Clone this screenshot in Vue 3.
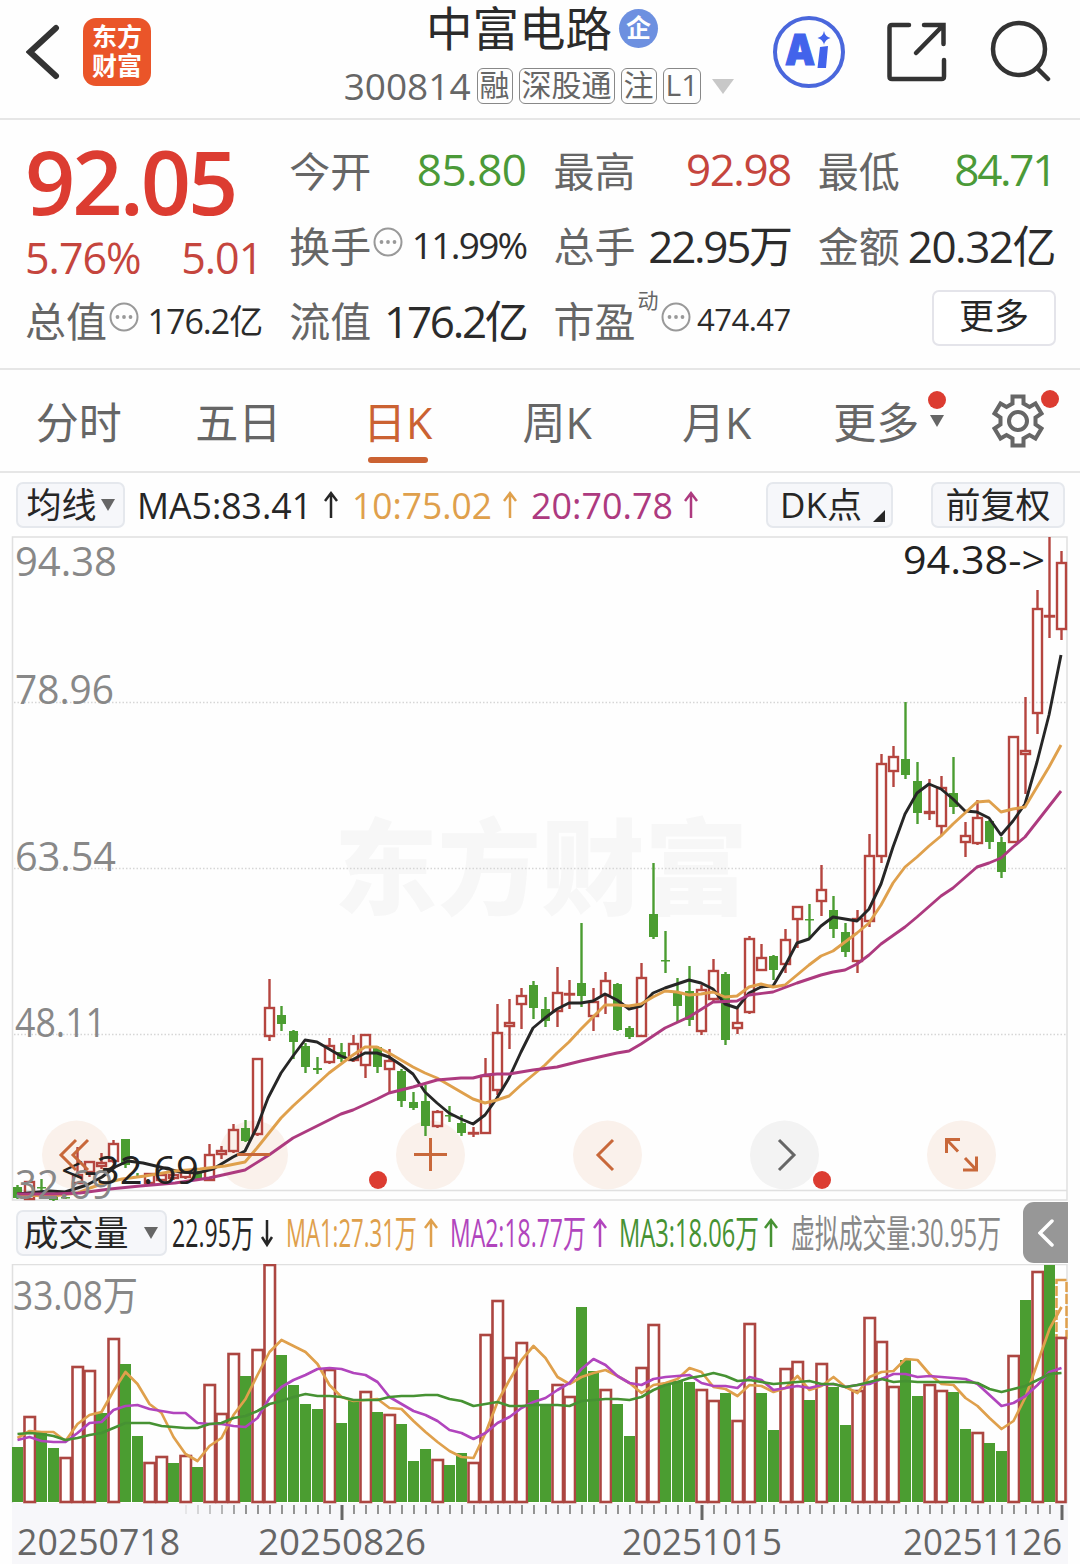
<template>
  <div class="page">
    <header class="header">
      <div class="header-left">
        <svg class="back-icon" viewBox="0 0 34 56"><path d="M30 4 L4 28 L30 52" /></svg>
        <div class="logo"><span>东方</span><span>财富</span></div>
      </div>

      <div class="stock">
        <div class="stock-name">
          <span class="name">中富电路</span>
          <span class="badge">企</span>
        </div>
        <div class="stock-code">
          <span class="code">300814</span>
          <span v-for="tag in tags" :key="tag" class="tag">{{ tag }}</span>
          <svg class="code-arrow" viewBox="0 0 22 15"><path d="M0 0 H22 L11 15 Z" /></svg>
        </div>
      </div>

      <div class="header-right">
        <svg class="ai-icon" viewBox="0 0 74 74">
          <circle cx="37" cy="37" r="34" />
          <text x="13" y="50" textLength="30" lengthAdjust="spacingAndGlyphs">A</text>
          <path d="M48 32 L56 31 L54 53 H45.500 Z M52 16 Q53 21.500 58.500 23 Q53 24.500 52 30 Q51 24.500 45.500 23 Q51 21.500 52 16 Z" />
        </svg>
        <svg class="line-icon share-icon" viewBox="0 0 60 60">
          <path d="M22 3 H5 Q2.500 3 2.500 5.500 V54.500 Q2.500 57 5 57 H54.500 Q57 57 57 54.500 V38" />
          <path d="M37 3 H56.500 V22 M56 3.500 L29 31" />
        </svg>
        <svg class="line-icon search-icon" viewBox="0 0 62 62">
          <circle cx="29" cy="29" r="26" />
          <path d="M47 48 L58 59" />
        </svg>
      </div>
    </header>

    <section class="stats">
      <div class="price-block">
        <div class="price">92.05</div>
        <div class="change"><span>5.76%</span><span>5.01</span></div>
      </div>
      <div v-for="item in stats" :key="item.label" class="stat">
        <span class="stat-label">{{ item.label }}</span>
        <sup v-if="item.sup" class="stat-sup">{{ item.sup }}</sup>
        <svg v-if="item.info" class="info-icon" viewBox="0 0 30 30">
          <circle class="ring" cx="15" cy="15" r="13.500" />
          <circle cx="8.500" cy="15" r="1.900" /><circle cx="15" cy="15" r="1.900" /><circle cx="21.500" cy="15" r="1.900" />
        </svg>
        <span class="stat-value" :class="[item.color, item.size]">{{ item.value }}</span>
      </div>
      <div class="stat stat-more"><button class="more-btn">更多</button></div>
    </section>

    <nav class="tabs">
      <div
        v-for="tab in tabs"
        :key="tab"
        class="tab"
        :class="{ active: tab === activeTab }"
        @click="activeTab = tab"
      >
        <span>{{ tab }}</span>
        <div v-if="tab === '更多'" class="tab-more">
          <i class="red-dot"></i>
          <svg viewBox="0 0 14 12"><path d="M0 0 H14 L7 12 Z" /></svg>
        </div>
      </div>
      <div class="settings">
        <svg viewBox="0 0 52 54">
          <path d="M20.500 2.500 H31.500 V9.500 L37.500 13 L43.500 9.500 L49.500 19.500 L43.500 23.500 V30.500 L49.500 34.500 L43.500 44.500 L37.500 41 L31.500 44.500 V51.500 H20.500 V44.500 L14.500 41 L8.500 44.500 L2.500 34.500 L8.500 30.500 V23.500 L2.500 19.500 L8.500 9.500 L14.500 13 L20.500 9.500 Z" />
          <circle cx="26" cy="27" r="9" />
        </svg>
        <i class="red-dot"></i>
      </div>
    </nav>

    <div class="ma-bar">
      <button class="chip chip-ma">均线<svg viewBox="0 0 14 12"><path d="M0 0 H14 L7 12 Z" /></svg></button>
      <svg class="ma-legend" viewBox="134 473 590 64">
        <g v-for="m in maLegend" :key="m.text" :class="m.color">
          <text :x="m.x" y="519" :textLength="m.w" lengthAdjust="spacingAndGlyphs">{{ m.text }}</text>
          <path :d="arrowUp(m.arrow, 493, 518)" />
        </g>
      </svg>
      <button class="chip chip-dk">DK点<svg viewBox="0 0 12 12"><path d="M12 0 V12 H0 Z" /></svg></button>
      <button class="chip chip-fq">前复权</button>
    </div>

    <svg class="chart" viewBox="0 536 1080 665">
      <text class="watermark" x="334" y="907" textLength="414" lengthAdjust="spacingAndGlyphs">东方财富</text>
      <path class="frame" d="M12.500 1200 V537 H1067 V1200 Z M12.500 1190.500 H1067" />
      <path class="grid-line" d="M14 702.500 H1067 M14 868.500 H1067 M14 1034.500 H1067" />

      <circle
        v-for="(x, i) in controls"
        :key="x"
        :cx="x"
        cy="1155"
        r="34.500"
        :class="i === 4 ? 'ctl-gray' : 'ctl'"
      />

      <g v-for="(c, i) in candles" :key="i" :class="c[0] ? 'up' : 'down'">
        <path :d="wick(c, i)" />
        <rect v-if="c[0]" :x="cx(i) - 4.500" :y="c[2] + 1" width="9" :height="Math.max(c[3] - c[2] - 2, 0.5)" />
        <rect v-else :x="cx(i) - 4.500" :y="c[2]" width="9" :height="Math.max(c[3] - c[2], 1.500)" />
      </g>

      <polyline class="line black" :points="ma5" />
      <polyline class="line orange" :points="ma10" />
      <polyline class="line magenta" :points="ma20" />

      <text
        v-for="l in priceLabels"
        :key="l.text"
        class="axis-text"
        x="15"
        :y="l.y"
        :textLength="l.w"
        lengthAdjust="spacingAndGlyphs"
      >{{ l.text }}</text>
      <text class="mark-text" x="903" y="574" textLength="142" lengthAdjust="spacingAndGlyphs">94.38-&gt;</text>
      <text class="mark-text" x="61" y="1184" textLength="138" lengthAdjust="spacingAndGlyphs">&lt;-32.69</text>

      <path class="ctl-icon" d="M76 1140 L61 1155 L76 1170 M88 1140 L73 1155 L88 1170" />
      <path class="ctl-icon" d="M237 1154.500 H270" />
      <path class="ctl-icon" d="M414 1154.500 H447 M430.500 1138 V1171" />
      <path class="ctl-icon" d="M613 1140 L598 1155 L613 1170" />
      <path class="ctl-icon gray" d="M779 1140 L794 1155 L779 1170" />
      <path class="ctl-icon" d="M960 1139.500 H946.500 V1153 M947 1140 L958 1151.500 M963 1170 H976.500 V1156.500 M976 1169.500 L965 1158" />
      <circle class="dot" cx="378" cy="1180" r="9" />
      <circle class="dot" cx="822" cy="1180" r="9" />
    </svg>

    <div class="volume-bar">
      <button class="chip chip-vol">成交量<svg viewBox="0 0 14 12"><path d="M0 0 H14 L7 12 Z" /></svg></button>
      <svg class="volume-legend" viewBox="167 1201 856 63">
        <g v-for="m in volumeLegend" :key="m.text" :class="m.color">
          <text :x="m.x" y="1247" :textLength="m.w" lengthAdjust="spacingAndGlyphs">{{ m.text }}</text>
          <path v-if="m.down" :d="arrowDown(m.arrow, 1220, 1245)" />
          <path v-else-if="m.arrow" :d="arrowUp(m.arrow, 1220, 1247)" />
        </g>
      </svg>
      <button class="side-btn"><svg viewBox="0 0 16 28"><path d="M14 2 L2 14 L14 26" /></svg></button>
    </div>

    <svg class="volume" viewBox="0 1264 1080 300">
      <rect class="axis-bg" x="12" y="1503" width="1056" height="61" />
      <path class="frame" d="M12.500 1503 V1264.500 H1067 V1503" />
      <text class="axis-text" x="13" y="1310" textLength="125" lengthAdjust="spacingAndGlyphs">33.08万</text>
      <rect class="estimate" x="1056.500" y="1280" width="10" height="58" />
      <g v-for="(v, i) in volumes" :key="i">
        <rect
          v-if="hollow.has(i)"
          class="vol-up"
          :x="cx(i) - 5"
          :y="v + 1"
          :width="i === 87 ? 9 : 10.500"
          :height="1501 - v"
        />
        <rect v-else class="vol-down" :x="cx(i) - 5.500" :y="v" width="11" :height="1502 - v" />
      </g>
      <polyline class="line vol-line orange" :points="series(vma1)" />
      <polyline class="line vol-line purple" :points="series(vma2)" />
      <polyline class="line vol-line green" :points="series(vma3)" />
      <line
        v-for="t in ticks"
        :key="t.x"
        :class="t.major ? 'tick-major' : 'tick'"
        :x1="t.x"
        :x2="t.x"
        y1="1505"
        :y2="t.major ? 1520 : 1514"
        :stroke-opacity="t.opacity"
      />
      <text
        v-for="d in dates"
        :key="d.text"
        class="date-text"
        :x="d.x"
        y="1555"
        :textLength="d.w"
        lengthAdjust="spacingAndGlyphs"
      >{{ d.text }}</text>
    </svg>
  </div>
</template>

<script setup>
import { ref } from 'vue';

const tags = ['融', '深股通', '注', 'L1'];

const stats = [
  { label: '今开', value: '85.80', color: 'green' },
  { label: '最高', value: '92.98', color: 'red', size: 'snug' },
  { label: '最低', value: '84.71', color: 'green', size: 'tight' },
  { label: '换手', value: '11.99%', info: true, size: 'mid' },
  { label: '总手', value: '22.95万', size: 'tight' },
  { label: '金额', value: '20.32亿', size: 'snug' },
  { label: '总值', value: '176.2亿', info: true, size: 'small' },
  { label: '流值', value: '176.2亿', size: 'tight' },
  { label: '市盈', value: '474.47', sup: '动', info: true, size: 'tiny' }
];

const tabs = ['分时', '五日', '日K', '周K', '月K', '更多'];
const activeTab = ref('日K');

const maLegend = [
  { text: 'MA5:83.41', x: 137, w: 175, arrow: 331, color: 'black' },
  { text: '10:75.02', x: 352, w: 140, arrow: 510, color: 'orange' },
  { text: '20:70.78', x: 531, w: 142, arrow: 691, color: 'magenta' }
];

const volumeLegend = [
  { text: '22.95万', x: 172, w: 82, arrow: 267, color: 'black', down: true },
  { text: 'MA1:27.31万', x: 286, w: 131, arrow: 431, color: 'orange' },
  { text: 'MA2:18.77万', x: 450, w: 136, arrow: 600, color: 'purple' },
  { text: 'MA3:18.06万', x: 619, w: 140, arrow: 771, color: 'green' },
  { text: '虚拟成交量:30.95万', x: 791, w: 210, color: 'gray' }
];

const priceLabels = [
  { text: '94.38', y: 576, w: 102 },
  { text: '78.96', y: 704, w: 99 },
  { text: '63.54', y: 871, w: 101 },
  { text: '48.11', y: 1037, w: 91 },
  { text: '32.69', y: 1199, w: 98 }
];

const dates = [
  { text: '20250718', x: 17, w: 163 },
  { text: '20250826', x: 258, w: 168 },
  { text: '20251015', x: 622, w: 160 },
  { text: '20251126', x: 903, w: 159 }
];

const controls = [76.5, 253.5, 430.5, 607.5, 784.5, 961.5];

// [up, high, body top, body bottom, low]
const candles = [
  [0, 1185, 1187, 1198, 1199], [1, 1181, 1181, 1200, 1200], [0, 1179, 1187, 1188, 1193], [0, 1197, 1197, 1200, 1201],
  [0, 1197, 1197, 1198, 1199], [1, 1147, 1174, 1184, 1184], [1, 1161, 1161, 1173, 1177], [1, 1153, 1162, 1167, 1169],
  [1, 1140, 1143, 1162, 1163], [0, 1139, 1139, 1165, 1168], [0, 1173, 1176, 1177, 1178], [1, 1173, 1173, 1184, 1184],
  [1, 1174, 1174, 1181, 1181], [1, 1172, 1174, 1179, 1180], [1, 1170, 1171, 1178, 1179], [0, 1171, 1172, 1179, 1180],
  [1, 1144, 1154, 1181, 1181], [1, 1146, 1150, 1155, 1159], [1, 1124, 1129, 1152, 1153], [0, 1120, 1128, 1141, 1142],
  [1, 1058, 1058, 1135, 1136], [1, 979, 1007, 1037, 1041], [0, 1006, 1015, 1024, 1031], [0, 1030, 1031, 1042, 1059],
  [0, 1043, 1046, 1067, 1073], [0, 1057, 1068, 1070, 1074], [1, 1038, 1045, 1063, 1064], [0, 1043, 1052, 1059, 1062],
  [1, 1035, 1043, 1061, 1062], [1, 1034, 1034, 1066, 1078], [0, 1046, 1047, 1067, 1073], [1, 1049, 1060, 1070, 1093],
  [0, 1069, 1071, 1101, 1107], [0, 1092, 1102, 1108, 1110], [0, 1085, 1101, 1126, 1136], [1, 1110, 1111, 1127, 1128],
  [0, 1106, 1115, 1116, 1122], [0, 1115, 1123, 1133, 1136], [1, 1127, 1132, 1134, 1137], [1, 1058, 1075, 1134, 1134],
  [1, 1004, 1032, 1091, 1095], [1, 999, 1022, 1027, 1049], [1, 988, 995, 1005, 1029], [0, 981, 985, 1008, 1019],
  [0, 997, 1009, 1021, 1027], [1, 967, 992, 1012, 1027], [1, 980, 993, 994, 1009], [0, 923, 983, 996, 1007],
  [1, 988, 1001, 1017, 1031], [1, 972, 980, 996, 1014], [0, 983, 984, 1030, 1031], [0, 1026, 1028, 1037, 1039],
  [1, 963, 977, 1037, 1037], [0, 863, 914, 937, 939], [0, 931, 960, 961, 973], [0, 978, 993, 1006, 1022],
  [0, 966, 991, 1020, 1026], [1, 985, 989, 1032, 1035], [1, 959, 970, 1000, 1003], [0, 972, 974, 1040, 1045],
  [1, 1007, 1022, 1029, 1034], [1, 936, 938, 1013, 1014], [1, 944, 957, 971, 971], [0, 955, 956, 970, 980],
  [1, 929, 939, 965, 973], [1, 906, 906, 920, 948], [0, 904, 919, 920, 938], [1, 865, 889, 902, 916],
  [0, 896, 910, 929, 938], [0, 923, 932, 952, 957], [1, 910, 918, 962, 973], [1, 834, 855, 922, 927],
  [1, 754, 763, 857, 863], [1, 746, 756, 772, 787], [0, 702, 759, 775, 779], [0, 762, 781, 813, 824],
  [1, 779, 811, 814, 820], [1, 776, 787, 827, 835], [0, 757, 793, 807, 814], [1, 822, 835, 843, 857],
  [1, 800, 817, 844, 845], [0, 820, 821, 842, 849], [0, 837, 842, 872, 878], [1, 736, 736, 843, 843],
  [1, 697, 750, 755, 794], [1, 590, 608, 714, 734], [1, 537, 615, 617, 638], [1, 551, 562, 630, 640]
];

const ma5 = '17,1194 50,1191 65,1192 87,1185 102,1177 115,1167 128,1161 143,1163 160,1167 180,1172 197,1173 213,1169 223,1163 233,1157 245,1151 257,1127 268,1098 281,1073 293,1056 305,1040 317,1042 329,1049 341,1056 352,1060 365,1053 377,1053 389,1057 401,1065 413,1074 425,1092 437,1103 449,1113 461,1119 473,1124 485,1115 497,1098 509,1078 521,1052 533,1028 545,1018 557,1009 569,1003 581,1003 593,1001 605,994 617,1000 629,1009 641,1006 653,993 665,988 677,984 689,980 701,983 713,989 725,1004 737,1008 749,993 761,987 773,986 785,966 797,943 809,939 821,926 833,917 845,919 857,921 869,909 881,884 893,847 905,814 917,793 929,784 941,789 953,799 965,811 977,812 989,818 1001,835 1013,821 1025,804 1037,762 1049,715 1061,655';
const ma10 = '17,1195 53,1196 77,1193 90,1188 105,1183 122,1179 145,1176 175,1171 200,1169 225,1166 245,1162 257,1148 269,1133 281,1118 293,1106 305,1095 317,1084 329,1073 341,1064 353,1055 365,1047 377,1047 389,1053 401,1060 413,1067 425,1073 437,1078 449,1085 461,1092 473,1099 485,1103 497,1100 509,1096 521,1085 533,1075 545,1065 557,1053 569,1042 581,1029 593,1017 605,1005 617,1005 629,1006 641,1004 653,997 665,991 677,992 689,995 701,994 713,992 725,997 737,996 749,987 761,984 773,987 785,985 797,975 809,965 821,956 833,951 845,942 857,933 869,923 881,905 893,883 905,867 917,857 929,846 941,836 953,824 965,813 977,802 989,801 1001,812 1013,809 1025,807 1037,787 1049,767 1061,745';
const ma20 = '17,1194 53,1194 80,1193 110,1189 140,1186 175,1183 209,1178 245,1170 269,1155 293,1138 317,1126 341,1114 353,1110 377,1099 389,1093 413,1087 437,1080 461,1078 473,1078 485,1075 497,1074 509,1074 533,1070 557,1067 581,1061 617,1053 629,1051 641,1044 665,1028 689,1017 713,1002 737,1001 749,995 773,992 797,983 821,975 833,972 845,970 857,964 869,955 881,944 905,927 917,917 941,896 953,888 977,867 989,863 1001,858 1013,847 1025,837 1061,791';

const volumes = [
  1447, 1416, 1433, 1448, 1457, 1366, 1370, 1413, 1338, 1364, 1436, 1462, 1456, 1463, 1455, 1467, 1384, 1413, 1353, 1376, 1349, 1264,
  1355, 1385, 1404, 1409, 1369, 1423, 1400, 1391, 1412, 1414, 1424, 1461, 1449, 1459, 1465, 1453, 1462, 1334, 1300, 1357, 1342, 1390,
  1405, 1384, 1396, 1307, 1371, 1389, 1404, 1436, 1367, 1324, 1384, 1381, 1382, 1389, 1400, 1393, 1420, 1323, 1393, 1430, 1368, 1361,
  1400, 1363, 1387, 1425, 1390, 1317, 1341, 1386, 1360, 1396, 1384, 1390, 1392, 1429, 1432, 1443, 1451, 1355, 1300, 1271, 1265, 1337
];
const hollow = new Set([
  1, 4, 5, 6, 8, 11, 12, 14, 16, 17, 18, 20, 21, 26, 29, 31, 35, 38, 39, 40, 41, 42, 45, 46, 49, 52, 53, 57, 58, 60, 61,
  64, 65, 67, 70, 71, 72, 73, 76, 77, 80, 83, 85, 87
]);

const vma1 = [
  1438, 1431, 1432, 1432, 1441, 1424, 1415, 1412, 1391, 1372, 1384, 1404, 1413, 1437, 1454, 1461, 1446, 1438, 1415, 1399, 1375, 1352,
  1340, 1346, 1352, 1364, 1385, 1397, 1401, 1400, 1399, 1408, 1409, 1421, 1432, 1442, 1451, 1457, 1458, 1433, 1402, 1380, 1360, 1346,
  1358, 1377, 1384, 1377, 1373, 1370, 1376, 1383, 1393, 1385, 1383, 1379, 1368, 1372, 1387, 1389, 1396, 1385, 1386, 1392, 1388, 1376,
  1390, 1386, 1377, 1387, 1393, 1377, 1372, 1371, 1359, 1360, 1374, 1384, 1385, 1398, 1406, 1418, 1429, 1421, 1397, 1363, 1329, 1307
];
const vma2 = [
  1440, 1437, 1441, 1442, 1442, 1433, 1423, 1422, 1410, 1406, 1405, 1409, 1411, 1413, 1413, 1423, 1424, 1424, 1426, 1427, 1418, 1398,
  1387, 1380, 1375, 1369, 1368, 1369, 1373, 1375, 1382, 1397, 1404, 1411, 1415, 1421, 1430, 1433, 1439, 1433, 1423, 1417, 1408, 1402,
  1398, 1390, 1383, 1369, 1359, 1365, 1376, 1383, 1385, 1379, 1377, 1376, 1375, 1383, 1386, 1386, 1388, 1377, 1380, 1390, 1388, 1386,
  1388, 1385, 1384, 1387, 1385, 1384, 1379, 1374, 1374, 1377, 1376, 1377, 1378, 1379, 1384, 1395, 1406, 1403, 1396, 1385, 1372, 1368
];
const vma3 = [
  1434, 1433, 1434, 1436, 1440, 1438, 1435, 1433, 1428, 1423, 1423, 1423, 1426, 1427, 1428, 1428, 1424, 1423, 1418, 1416, 1411, 1404,
  1401, 1397, 1394, 1396, 1396, 1397, 1400, 1400, 1400, 1397, 1396, 1396, 1395, 1395, 1399, 1401, 1406, 1404, 1402, 1406, 1406, 1405,
  1405, 1405, 1406, 1401, 1400, 1399, 1399, 1400, 1397, 1390, 1385, 1382, 1378, 1376, 1373, 1376, 1381, 1380, 1382, 1384, 1383, 1382,
  1381, 1384, 1384, 1387, 1385, 1382, 1379, 1382, 1381, 1382, 1382, 1382, 1382, 1382, 1383, 1389, 1392, 1389, 1386, 1380, 1374, 1373
];

const cx = (i) => 17.5 + i * 12;

const wick = (c, i) => {
  // thin bodies are plain crosses, so the wick runs straight through
  if (!c[0] || c[3] - c[2] < 4) {
    return `M${cx(i)} ${c[1]} V${c[4]}`;
  }
  return `M${cx(i)} ${c[1]} V${c[2]} M${cx(i)} ${c[3]} V${c[4]}`;
};

const series = (values) => values.map((v, i) => `${cx(i)},${v}`).join(' ');

const arrowUp = (x, top, bottom) => `M${x} ${bottom} V${top + 1} M${x - 6} ${top + 8} L${x} ${top} L${x + 6} ${top + 8}`;
const arrowDown = (x, top, bottom) => `M${x} ${top} V${bottom - 1} M${x - 5} ${bottom - 8} L${x} ${bottom} L${x + 5} ${bottom - 8}`;

const majorTicks = [27, 57, 87];
const ticks = [];
for (let i = 14; i < 88; i++) {
  ticks.push({ x: cx(i) + 0.5, major: majorTicks.includes(i), opacity: Math.min(1, (i - 13) / 6) });
}
</script>

<style>
body {
  background: #fff;
}
</style>

<style scoped>
.page {
  width: 1080px;
  height: 1564px;
  overflow: hidden;
  background: #fefefe;
  color: #2b2b2b;
  font-family: "Open Sans", "Noto Sans CJK SC", sans-serif;
}

svg {
  display: block;
  flex: none;
}

button {
  font-family: inherit;
  color: #262626;
  padding: 0;
}

.header {
  box-sizing: border-box;
  height: 120px;
  border-bottom: 2px solid #e6e6e6;
  display: grid;
  grid-template-columns: 300px 1fr 320px;
}

.header-left {
  display: flex;
  align-items: flex-start;
  padding: 18px 0 0 26px;
  gap: 23px;
}

.back-icon {
  width: 34px;
  height: 56px;
  margin-top: 6px;
  fill: none;
  stroke: #333;
  stroke-width: 6;
  stroke-linecap: round;
}

.logo {
  width: 68px;
  height: 68px;
  border-radius: 13px;
  background: #ea5529;
  color: #fff;
  display: flex;
  flex-direction: column;
  align-items: center;
  justify-content: center;
  padding-bottom: 2px;
  box-sizing: border-box;
  font-size: 25px;
  font-weight: 700;
  line-height: 29px;
}

.stock {
  display: flex;
  flex-direction: column;
  align-items: center;
  padding-left: 18px;
}

.stock-name {
  display: flex;
  align-items: center;
  gap: 7px;
  height: 57px;
  padding-left: 6px;
  font-size: 46.5px;
  white-space: nowrap;
}

.name {
  margin-top: -5px;
}

.badge {
  width: 39px;
  height: 39px;
  border-radius: 50%;
  background: #6d90e0;
  color: #fff;
  font-size: 25px;
  font-weight: 700;
  line-height: 36px;
  text-align: center;
}

.stock-code {
  display: flex;
  align-items: center;
  gap: 6px;
  height: 58px;
  color: #666;
}

.code {
  margin-top: -2px;
  font-size: 37px;
}

.tag {
  box-sizing: border-box;
  height: 36px;
  padding: 0 2px;
  border: 1.5px solid #888;
  border-radius: 6px;
  font-size: 30px;
  line-height: 32px;
}

.code-arrow {
  width: 22px;
  height: 15px;
  margin-left: 5px;
  fill: #c8c8c8;
}

.header-right {
  display: flex;
  align-items: flex-start;
  padding: 15px 0 0 12px;
}

.ai-icon {
  width: 74px;
  height: 74px;
  fill: #4263eb;
}

.ai-icon circle {
  fill: none;
  stroke: #4a67dc;
  stroke-width: 4;
}

.ai-icon text {
  font-family: Inter, sans-serif;
  font-size: 42px;
  font-weight: 900;
  stroke: #4263eb;
  stroke-width: 1.2;
}

.line-icon {
  fill: none;
  stroke: #333;
  stroke-width: 4.5;
  stroke-linecap: round;
}

.share-icon {
  width: 60px;
  height: 60px;
  margin: 7px 0 0 41px;
}

.search-icon {
  width: 62px;
  height: 62px;
  margin: 5px 0 0 43px;
}

.stats {
  box-sizing: border-box;
  height: 250px;
  padding: 12px 25px 0;
  border-bottom: 2px solid #e6e6e6;
  display: grid;
  grid-template-columns: repeat(4, 1fr);
  grid-template-rows: repeat(3, 75px);
  column-gap: 27px;
}

.price-block {
  grid-row: span 2;
}

.price {
  height: 98px;
  line-height: 99px;
  font-size: 88px;
  font-weight: 600;
  letter-spacing: -3px;
  color: #dc3c31;
}

.change {
  display: flex;
  justify-content: space-between;
  line-height: 56px;
  font-size: 43px;
  letter-spacing: -1px;
  color: #c5453d;
}

.stat {
  display: flex;
  align-items: center;
  min-width: 0;
  white-space: nowrap;
}

.stat-label {
  margin-top: -1px;
  font-size: 41px;
  color: #666;
}

.stat-sup {
  align-self: flex-start;
  margin: 4px 0 0 2px;
  font-size: 21px;
  line-height: 28px;
  color: #666;
}

.info-icon {
  width: 30px;
  height: 30px;
  margin: -6px 0 0 2px;
  fill: #999;
}

.info-icon .ring {
  fill: none;
  stroke: #999;
  stroke-width: 2;
}

.stat-value {
  margin: -1px 0 0 auto;
  font-size: 44px;
  letter-spacing: -0.5px;
}

.stat-value.snug {
  letter-spacing: -1.5px;
}

.stat-value.tight {
  letter-spacing: -2.3px;
}

.stat-value.mid {
  font-size: 37px;
  letter-spacing: -1.7px;
}

.stat-value.small {
  font-size: 34px;
  letter-spacing: -1px;
}

.stat-value.tiny {
  font-size: 31px;
}

.stat-value.green {
  color: #4b9a38;
}

.stat-value.red {
  color: #c5453d;
}

.stat-more {
  justify-content: flex-end;
}

.more-btn {
  width: 124px;
  height: 56px;
  margin: -3px -1px 0 0;
  background: #fff;
  border: 2px solid #e4e4ea;
  border-radius: 7px;
  font-size: 35px;
  line-height: 46px;
  padding-bottom: 4px;
}

.tabs {
  box-sizing: border-box;
  height: 103px;
  border-bottom: 2px solid #e6e6e6;
  display: flex;
}

.tab {
  position: relative;
  width: 159.5px;
  line-height: 106px;
  font-size: 43px;
  text-align: center;
  text-indent: -2px;
  color: #666;
}

.tab.active {
  color: #cb6232;
}

.tab.active::after {
  content: "";
  position: absolute;
  left: 50%;
  bottom: 8px;
  width: 60px;
  height: 6px;
  margin-left: -31px;
  border-radius: 3px;
  background: #cb6232;
}

.red-dot {
  display: block;
  width: 18px;
  height: 18px;
  border-radius: 50%;
  background: #dc3c31;
}

.tab-more {
  position: absolute;
  left: 130px;
  top: 21px;
}

.tab-more svg {
  width: 14px;
  height: 12px;
  margin: 6px 0 0 2px;
  fill: #666;
}

.settings {
  position: relative;
  padding: 24px 0 0 35px;
}

.settings svg {
  width: 52px;
  height: 54px;
  fill: none;
  stroke: #666;
  stroke-width: 4;
}

.settings .red-dot {
  position: absolute;
  left: 84px;
  top: 20px;
}

.ma-bar {
  display: flex;
  align-items: center;
  height: 63px;
  padding-left: 16px;
}

.chip {
  box-sizing: border-box;
  height: 46px;
  display: flex;
  align-items: center;
  justify-content: center;
  background: #f6f7fa;
  border: 2px solid #e5e8ed;
  border-radius: 7px;
  font-size: 35px;
  line-height: 40px;
}

.chip svg {
  width: 14px;
  height: 12px;
  fill: #666;
}

.chip-ma {
  width: 109px;
}

.chip-ma svg {
  margin-left: 4px;
}

.ma-legend {
  width: 590px;
  height: 64px;
  margin-left: 9px;
  font-size: 37px;
}

.ma-legend path,
.volume-legend path {
  fill: none;
  stroke: currentColor;
  stroke-width: 2.5;
}

.ma-legend text,
.volume-legend text {
  fill: currentColor;
}

.chip-dk {
  width: 127px;
  margin-left: 42px;
}

.chip-dk svg {
  align-self: flex-end;
  width: 12px;
  height: 12px;
  margin: 0 -6px 4px 11px;
  fill: #262626;
}

.chip-fq {
  width: 134px;
  margin-left: 38px;
}

.black {
  color: #262626;
}

.orange {
  color: #dfa04c;
}

.magenta {
  color: #ad3a7f;
}

.purple {
  color: #b145bd;
}

.green {
  color: #469233;
}

.gray {
  color: #888;
}

.chart {
  width: 1080px;
  height: 665px;
  overflow: visible;
}

.watermark {
  font-family: "Noto Sans CJK SC", sans-serif;
  font-size: 104px;
  font-weight: 900;
  fill: #f7f7f7;
}

.frame {
  fill: none;
  stroke: #e0e0e0;
  stroke-width: 1.5;
}

.grid-line {
  stroke: #d6d6d6;
  stroke-width: 1.5;
  stroke-dasharray: 1.5 2;
}

.ctl {
  fill: #faf1eb;
}

.ctl-gray {
  fill: #f3f3f3;
}

.ctl-icon {
  fill: none;
  stroke: #c8683a;
  stroke-width: 3;
}

.ctl-icon.gray {
  stroke: #666;
}

.dot {
  fill: #dc3c31;
}

.up path,
.up rect {
  fill: none;
  stroke: #b5453f;
  stroke-width: 2.4;
}

.down path {
  stroke: #4b9d31;
  stroke-width: 2.4;
}

.down rect {
  fill: #4b9d31;
}

.line {
  fill: none;
  stroke: currentColor;
  stroke-width: 2.9;
  stroke-linejoin: round;
}

.vol-line {
  stroke-width: 2.7;
}

.axis-text {
  font-size: 40px;
  fill: #888;
}

.mark-text {
  font-size: 39px;
  fill: #222;
}

.volume-bar {
  display: flex;
  align-items: center;
  height: 63px;
  padding-left: 16px;
}

.chip-vol {
  width: 151px;
}

.chip-vol svg {
  margin: 0 2px 0 15px;
}

.volume-legend {
  width: 856px;
  height: 63px;
  font-size: 38px;
}

.side-btn {
  width: 45px;
  height: 61px;
  border: none;
  border-radius: 11px 0 0 11px;
  background: #979797;
  display: flex;
  align-items: center;
  justify-content: center;
}

.side-btn svg {
  width: 16px;
  height: 28px;
  fill: none;
  stroke: #fff;
  stroke-width: 3.5;
  stroke-linecap: round;
}

.volume {
  width: 1080px;
  height: 300px;
}

.axis-bg {
  fill: #f7f7fa;
}

.estimate {
  fill: none;
  stroke: #dfa04c;
  stroke-width: 2.5;
  stroke-dasharray: 10 2;
}

.vol-up {
  fill: #fff;
  stroke: #ac4641;
  stroke-width: 2.6;
}

.vol-down {
  fill: #4b9d31;
}

.tick {
  stroke: #888;
  stroke-width: 1.8;
}

.tick-major {
  stroke: #666;
  stroke-width: 3;
}

.date-text {
  font-size: 36px;
  fill: #666;
}
</style>
